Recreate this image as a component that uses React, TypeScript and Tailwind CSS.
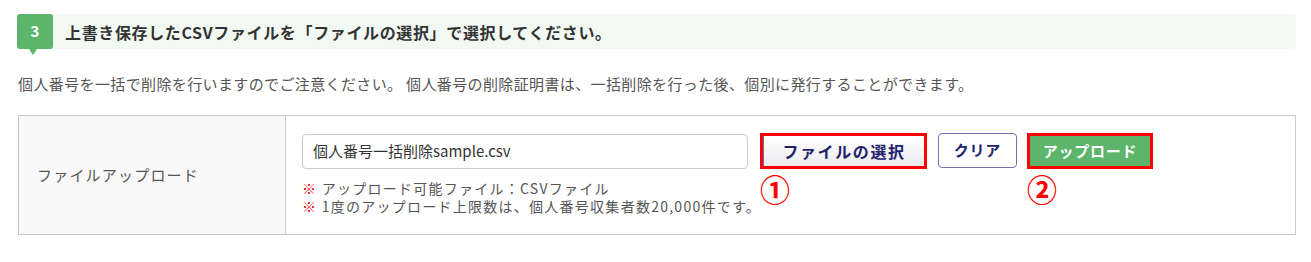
import React from "react";

const font = { fontFamily: '"Noto Sans CJK JP", "Noto Sans", sans-serif' };

export default function App() {
  return (
    <div
      className="w-[1311px] h-[262px] bg-white overflow-hidden pt-[14px] pl-[17px] pr-[15px]"
      style={font}
    >
      {/* Step header */}
      <div className="flex items-center h-[35px] bg-[#f2f9f3] rounded-[4px]">
        <div className="relative w-[36px] h-[35px] bg-[#5cb56b] rounded-[3px] flex items-center justify-center text-white font-bold text-[15px]">
          3
          <div className="absolute left-[12px] top-[35px] w-0 h-0 border-l-[4px] border-r-[4px] border-t-[6px] border-l-transparent border-r-transparent border-t-[#5cb56b]" />
        </div>
        <div className="ml-[12px] text-[16px] font-bold text-[#333333] tracking-[0.04em]">
          上書き保存したCSVファイルを「ファイルの選択」で選択してください。
        </div>
      </div>

      {/* Description */}
      <p className="mt-[24px] ml-[1px] text-[15px] leading-[22px] text-[#555555] tracking-[0.025em]">
        個人番号を一括で削除を行いますのでご注意ください。 個人番号の削除証明書は、一括削除を行った後、個別に発行することができます。
      </p>

      {/* Table */}
      <div className="mt-[20px] ml-[1px] flex h-[120px] border border-[#c8c8c8]">
        <div className="w-[267px] shrink-0 bg-[#f9f9f9] border-r border-[#d0d0d0] flex items-center pl-[18px] text-[15px] text-[#555555] tracking-[0.08em]">
          ファイルアップロード
        </div>
        <div className="flex items-start pl-[16px] pt-[17px]">
          <div className="w-[446px] shrink-0 flex flex-col">
            <div className="mt-[1px] w-[446px] h-[35px] border border-[#cccccc] rounded-[4px] flex items-center pl-[10px] text-[15px] text-[#333333]">
              個人番号一括削除sample.csv
            </div>
            <div className="mt-[10px] whitespace-nowrap text-[14px] leading-[18px] text-[#555555] tracking-[0.09em]">
              <div>
                <span className="text-[#e60012]">※</span> アップロード可能ファイル：CSVファイル
              </div>
              <div>
                <span className="text-[#e60012]">※</span> 1度のアップロード上限数は、個人番号収集者数20,000件です。
              </div>
            </div>
          </div>

          <div className="ml-[12px] flex flex-col">
            <div className="w-[167px] h-[36px] border-[3px] border-[#ff0000]">
              <div className="w-full h-full border-l border-[#6a6ab0] bg-gradient-to-b from-[#ffffff] to-[#ececf0] flex items-center justify-center text-[16px] font-bold text-[#22226b] tracking-[0.1em]">
                ファイルの選択
              </div>
            </div>
            <div className="mt-[3px] text-[30px] leading-[32px] font-bold text-[#ff0000]">①</div>
          </div>

          <div className="ml-[11px] w-[79px] h-[35px] border border-[#7272b2] rounded-[4px] bg-white flex items-center justify-center text-[15px] font-bold text-[#22226b] tracking-[0.05em]">
            クリア
          </div>

          <div className="ml-[10px] flex flex-col">
            <div className="w-[126px] h-[36px] border-[3px] border-[#ff0000]">
              <div className="w-full h-full bg-[#5cb56b] flex items-center justify-center text-[15px] font-bold text-white tracking-[0.05em]">
                アップロード
              </div>
            </div>
            <div className="mt-[3px] text-[30px] leading-[32px] font-bold text-[#ff0000]">②</div>
          </div>
        </div>
      </div>
    </div>
  );
}
